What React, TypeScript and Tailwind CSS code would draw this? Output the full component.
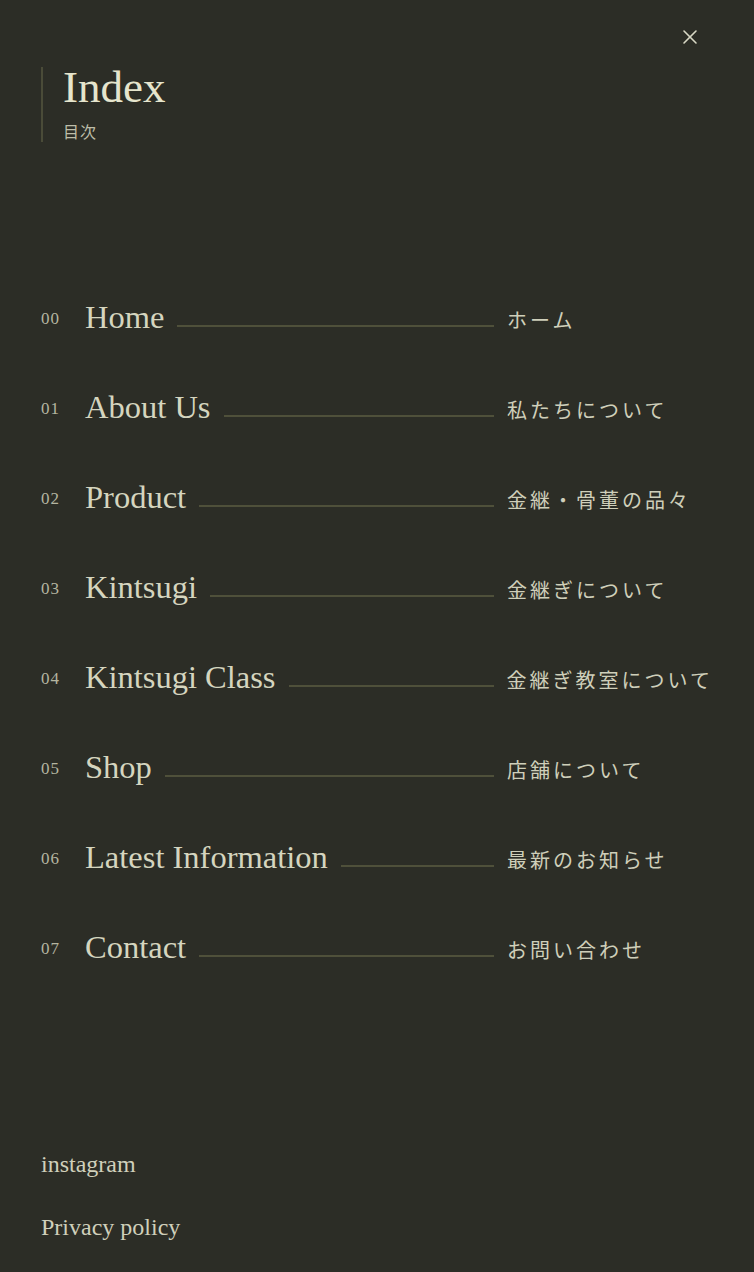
import { X } from 'lucide-react'

const items = [
  { no: '00', en: 'Home', ja: 'ホーム' },
  { no: '01', en: 'About Us', ja: '私たちについて' },
  { no: '02', en: 'Product', ja: '金継・骨董の品々' },
  { no: '03', en: 'Kintsugi', ja: '金継ぎについて' },
  { no: '04', en: 'Kintsugi Class', ja: '金継ぎ教室について' },
  { no: '05', en: 'Shop', ja: '店舗について' },
  { no: '06', en: 'Latest Information', ja: '最新のお知らせ' },
  { no: '07', en: 'Contact', ja: 'お問い合わせ' },
]

const serif = "font-['Liberation_Serif','Times_New_Roman',serif]"
const jp = "font-['Noto_Sans_CJK_JP','Noto_Sans_CJK_SC',sans-serif]"

export default function App() {
  return (
    <div className={`relative flex min-h-screen flex-col bg-[#2c2d26] px-[41px] text-[#d5d5bf] ${serif}`}>
      <button className="absolute right-[52px] top-[25px] text-[#d8d8c4]" aria-label="close">
        <X className="size-[24px]" strokeWidth={1.6} />
      </button>

      <header className="mt-[67px] flex h-[75px] flex-col border-l-2 border-[#4a4b38] pl-[20px]">
        <h1 className="text-[45px] leading-[40px] text-[#e6e5cd]">Index</h1>
        <p className={`mt-3 text-[16px] leading-[24px] tracking-[1px] text-[#bdbda8] ${jp}`}>目次</p>
      </header>

      <nav className="mt-[130px] flex flex-col">
        {items.map((item) => (
          <a key={item.no} href="#" className="flex h-[90px] items-baseline">
            <span className="w-[44px] shrink-0 -translate-y-[4px] text-[17px] leading-none tracking-[1px] text-[#b5b5a0]">
              {item.no}
            </span>
            <span className="shrink-0 text-[32.5px] leading-[90px]">{item.en}</span>
            <span className="mx-[13px] h-[3px] flex-1 border-t-2 border-[#4f503a]"></span>
            <span className={`min-w-[206px] shrink-0 text-[20px] leading-none tracking-[3px] text-[#cfcfba] ${jp}`}>
              {item.ja}
            </span>
          </a>
        ))}
      </nav>

      <footer className="mt-auto flex flex-col gap-[31px] pb-[29px] text-[24px] leading-[32px] text-[#d0d0bb]">
        <a href="#">instagram</a>
        <a href="#">Privacy policy</a>
      </footer>
    </div>
  )
}
